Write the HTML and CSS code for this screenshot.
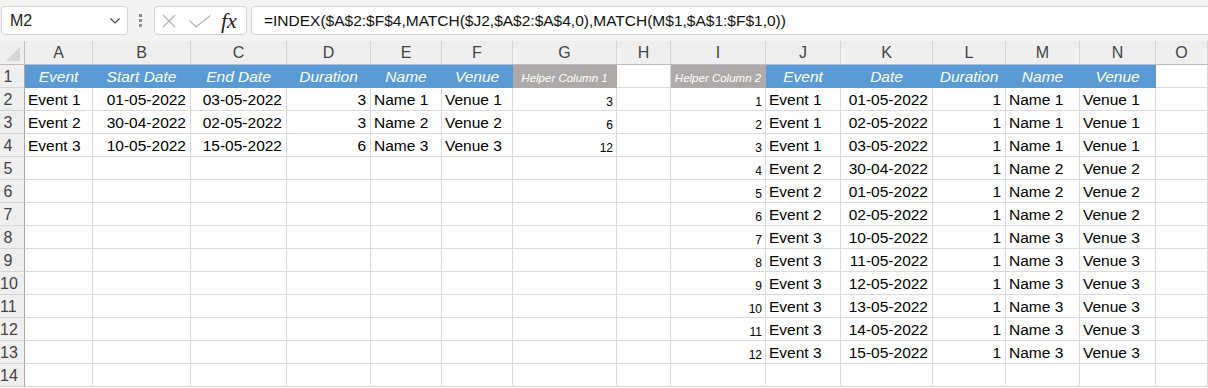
FILE: index.html
```html
<!DOCTYPE html>
<html lang="en">
<head>
  <meta charset="UTF-8">
  <title>Sheet - INDEX MATCH</title>
  <link rel="stylesheet" href="styles.css">
</head>
<body>

<!-- formula bar -->
<div class="topbar">
  <div class="namebox">
    <span>M2</span>
    <svg class="chev" width="10" height="6" viewBox="0 0 10 6"><path d="M0.5 0.5 L5 5 L9.5 0.5" fill="none" stroke="#444" stroke-width="1.2"/></svg>
  </div>
  <svg class="dots" width="4" height="14" viewBox="0 0 4 14">
    <rect x="0" y="0" width="3" height="3" fill="#8f8f8f"/>
    <rect x="0" y="5" width="3" height="3" fill="#8f8f8f"/>
    <rect x="0" y="10" width="3" height="3" fill="#8f8f8f"/>
  </svg>
  <div class="fxbox">
    <svg width="14" height="14" viewBox="0 0 14 14"><path d="M1 1 L13 13 M13 1 L1 13" stroke="#b3b3b3" stroke-width="1.3"/></svg>
    <svg class="tick" width="22" height="13" viewBox="0 0 22 13"><path d="M0.5 5.5 L7 12 L21.5 0.5" fill="none" stroke="#b3b3b3" stroke-width="1.3"/></svg>
    <span class="fx">fx</span>
  </div>
  <div class="formula">=INDEX($A$2:$F$4,MATCH($J2,$A$2:$A$4,0),MATCH(M$1,$A$1:$F$1,0))</div>
</div>

<!-- sheet -->
<div class="sheet">
  <div class="row colhead">
    <div class="corner"><svg width="14" height="14" viewBox="0 0 14 14"><path d="M14 0 L14 14 L0 14 Z" fill="#d6d6d6"/></svg></div>
    <div>A</div><div>B</div><div>C</div><div>D</div><div>E</div><div>F</div><div>G</div>
    <div>H</div><div>I</div><div>J</div><div>K</div><div>L</div><div>M</div><div>N</div><div>O</div>
  </div>

  <div class="row">
    <div class="rh">1</div>
    <div class="c hd">Event</div><div class="c hd">Start Date</div><div class="c hd">End Date</div>
    <div class="c hd">Duration</div><div class="c hd">Name</div><div class="c hd">Venue</div>
    <div class="c hp">Helper Column 1</div><div class="c"></div><div class="c hp">Helper Column 2</div>
    <div class="c hd">Event</div><div class="c hd">Date</div><div class="c hd">Duration</div>
    <div class="c hd">Name</div><div class="c hd">Venue</div><div class="c"></div>
  </div>

  <div class="row">
    <div class="rh">2</div>
    <div class="c">Event 1</div><div class="c n">01-05-2022</div><div class="c n">03-05-2022</div>
    <div class="c n">3</div><div class="c">Name 1</div><div class="c">Venue 1</div>
    <div class="c n sm">3</div><div class="c"></div><div class="c n sm">1</div>
    <div class="c">Event 1</div><div class="c n">01-05-2022</div><div class="c n">1</div>
    <div class="c">Name 1</div><div class="c">Venue 1</div><div class="c"></div>
  </div>

  <div class="row">
    <div class="rh">3</div>
    <div class="c">Event 2</div><div class="c n">30-04-2022</div><div class="c n">02-05-2022</div>
    <div class="c n">3</div><div class="c">Name 2</div><div class="c">Venue 2</div>
    <div class="c n sm">6</div><div class="c"></div><div class="c n sm">2</div>
    <div class="c">Event 1</div><div class="c n">02-05-2022</div><div class="c n">1</div>
    <div class="c">Name 1</div><div class="c">Venue 1</div><div class="c"></div>
  </div>

  <div class="row">
    <div class="rh">4</div>
    <div class="c">Event 3</div><div class="c n">10-05-2022</div><div class="c n">15-05-2022</div>
    <div class="c n">6</div><div class="c">Name 3</div><div class="c">Venue 3</div>
    <div class="c n sm">12</div><div class="c"></div><div class="c n sm">3</div>
    <div class="c">Event 1</div><div class="c n">03-05-2022</div><div class="c n">1</div>
    <div class="c">Name 1</div><div class="c">Venue 1</div><div class="c"></div>
  </div>

  <div class="row">
    <div class="rh">5</div>
    <div class="c"></div><div class="c"></div><div class="c"></div><div class="c"></div>
    <div class="c"></div><div class="c"></div><div class="c"></div><div class="c"></div>
    <div class="c n sm">4</div>
    <div class="c">Event 2</div><div class="c n">30-04-2022</div><div class="c n">1</div>
    <div class="c">Name 2</div><div class="c">Venue 2</div><div class="c"></div>
  </div>

  <div class="row">
    <div class="rh">6</div>
    <div class="c"></div><div class="c"></div><div class="c"></div><div class="c"></div>
    <div class="c"></div><div class="c"></div><div class="c"></div><div class="c"></div>
    <div class="c n sm">5</div>
    <div class="c">Event 2</div><div class="c n">01-05-2022</div><div class="c n">1</div>
    <div class="c">Name 2</div><div class="c">Venue 2</div><div class="c"></div>
  </div>

  <div class="row">
    <div class="rh">7</div>
    <div class="c"></div><div class="c"></div><div class="c"></div><div class="c"></div>
    <div class="c"></div><div class="c"></div><div class="c"></div><div class="c"></div>
    <div class="c n sm">6</div>
    <div class="c">Event 2</div><div class="c n">02-05-2022</div><div class="c n">1</div>
    <div class="c">Name 2</div><div class="c">Venue 2</div><div class="c"></div>
  </div>

  <div class="row">
    <div class="rh">8</div>
    <div class="c"></div><div class="c"></div><div class="c"></div><div class="c"></div>
    <div class="c"></div><div class="c"></div><div class="c"></div><div class="c"></div>
    <div class="c n sm">7</div>
    <div class="c">Event 3</div><div class="c n">10-05-2022</div><div class="c n">1</div>
    <div class="c">Name 3</div><div class="c">Venue 3</div><div class="c"></div>
  </div>

  <div class="row">
    <div class="rh">9</div>
    <div class="c"></div><div class="c"></div><div class="c"></div><div class="c"></div>
    <div class="c"></div><div class="c"></div><div class="c"></div><div class="c"></div>
    <div class="c n sm">8</div>
    <div class="c">Event 3</div><div class="c n">11-05-2022</div><div class="c n">1</div>
    <div class="c">Name 3</div><div class="c">Venue 3</div><div class="c"></div>
  </div>

  <div class="row">
    <div class="rh">10</div>
    <div class="c"></div><div class="c"></div><div class="c"></div><div class="c"></div>
    <div class="c"></div><div class="c"></div><div class="c"></div><div class="c"></div>
    <div class="c n sm">9</div>
    <div class="c">Event 3</div><div class="c n">12-05-2022</div><div class="c n">1</div>
    <div class="c">Name 3</div><div class="c">Venue 3</div><div class="c"></div>
  </div>

  <div class="row">
    <div class="rh">11</div>
    <div class="c"></div><div class="c"></div><div class="c"></div><div class="c"></div>
    <div class="c"></div><div class="c"></div><div class="c"></div><div class="c"></div>
    <div class="c n sm">10</div>
    <div class="c">Event 3</div><div class="c n">13-05-2022</div><div class="c n">1</div>
    <div class="c">Name 3</div><div class="c">Venue 3</div><div class="c"></div>
  </div>

  <div class="row">
    <div class="rh">12</div>
    <div class="c"></div><div class="c"></div><div class="c"></div><div class="c"></div>
    <div class="c"></div><div class="c"></div><div class="c"></div><div class="c"></div>
    <div class="c n sm">11</div>
    <div class="c">Event 3</div><div class="c n">14-05-2022</div><div class="c n">1</div>
    <div class="c">Name 3</div><div class="c">Venue 3</div><div class="c"></div>
  </div>

  <div class="row">
    <div class="rh">13</div>
    <div class="c"></div><div class="c"></div><div class="c"></div><div class="c"></div>
    <div class="c"></div><div class="c"></div><div class="c"></div><div class="c"></div>
    <div class="c n sm">12</div>
    <div class="c">Event 3</div><div class="c n">15-05-2022</div><div class="c n">1</div>
    <div class="c">Name 3</div><div class="c">Venue 3</div><div class="c"></div>
  </div>

  <div class="row">
    <div class="rh">14</div>
    <div class="c"></div><div class="c"></div><div class="c"></div><div class="c"></div>
    <div class="c"></div><div class="c"></div><div class="c"></div><div class="c"></div>
    <div class="c"></div><div class="c"></div><div class="c"></div><div class="c"></div>
    <div class="c"></div><div class="c"></div><div class="c"></div>
  </div>
</div>

</body>
</html>
```

FILE: styles.css
```css
* {
  margin: 0;
  padding: 0;
  box-sizing: border-box;
}

body {
  font-family: "Liberation Sans", Arial, sans-serif;
  font-size: 15.5px;
  color: #000;
  background: #fff;
  overflow: hidden;
}

/* ---- formula bar ---- */
.topbar {
  height: 41px;
  background: #f3f3f3;
  display: flex;
  align-items: flex-start;
  padding-top: 6px;
  overflow: hidden;
}

.namebox {
  margin-left: 1px;
  width: 127px;
  height: 29px;
  background: #fff;
  border: 1px solid #d4d4d4;
  border-radius: 4px;
  display: flex;
  align-items: center;
  justify-content: space-between;
  padding: 0 7px 0 8px;
  font-size: 16px;
  color: #222;
}

.chev {
  margin-top: 1px;
}

.dots {
  margin: 8px 0 0 11px;
}

.fxbox {
  margin-left: 11px;
  width: 93px;
  height: 29px;
  background: #fff;
  border: 1px solid #d4d4d4;
  border-radius: 4px;
  display: flex;
  align-items: center;
  padding-left: 7px;
}

.fxbox .tick {
  margin-left: 13px;
  margin-top: 1px;
}

.fx {
  margin-left: 10px;
  font-family: "Liberation Serif", "Times New Roman", serif;
  font-style: italic;
  font-size: 22px;
  line-height: 1;
  color: #222;
}

.formula {
  margin-left: 4px;
  flex: 1;
  margin-right: -12px;
  height: 29px;
  background: #fff;
  border: 1px solid #d4d4d4;
  border-radius: 4px;
  padding-left: 12px;
  line-height: 27px;
  color: #111;
  white-space: nowrap;
}

/* ---- grid ---- */
.row {
  display: grid;
  grid-template-columns: 25px 68px 98px 96px 84px 71px 71px 104px 54px 95px 75px 92px 73px 74px 76px 1fr;
  height: 23px;
}

.colhead {
  height: 24px;
  background: #efefef;
  border-bottom: 1px solid #bdbdbd;
}

.colhead div {
  border-right: 1px solid #d6d6d6;
  text-align: center;
  line-height: 23px;
  font-size: 16px;
  color: #444;
}

.colhead .corner {
  border-right: 1px solid #bdbdbd;
  display: flex;
  align-items: flex-end;
  justify-content: flex-end;
  padding: 0 4px 3px 0;
}

.rh {
  background: #efefef;
  border-right: 1px solid #a9a9a9;
  border-bottom: 1px solid #d6d6d6;
  text-align: center;
  padding: 2px 8px 0 0;
  line-height: 20px;
  font-size: 16px;
  color: #444;
}

.c {
  border-right: 1px solid #dadada;
  border-bottom: 1px solid #dadada;
  padding: 2px 3px 0 3px;
  line-height: 20px;
  white-space: nowrap;
  overflow: hidden;
}

.n {
  text-align: right;
  padding-right: 4px;
}

.sm {
  font-size: 12px;
  padding-top: 3.5px;
  padding-right: 3px;
}

.hd {
  background: #5b9bd5;
  border-color: #5b9bd5;
  color: #fff;
  font-style: italic;
  text-align: center;
}

.hp {
  background: #aeaaaa;
  border-color: #aeaaaa;
  color: #fff;
  font-style: italic;
  text-align: center;
  font-size: 11.5px;
  padding: 3px 0 0 0;
}
```
